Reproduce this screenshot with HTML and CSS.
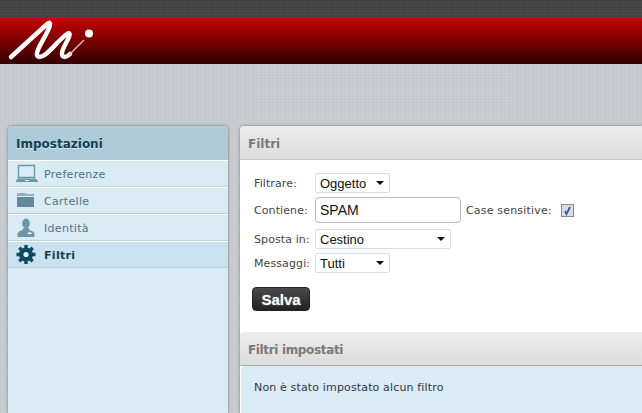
FILE: index.html
```html
<!doctype html>
<html lang="it">
  <head>
    <meta charset="UTF-8" />
    <title>Impostazioni - Filtri</title>
    <link rel="stylesheet" href="styles.css">
  </head>

  <body>
    <div class="topbar"></div>

    <header class="brand">
      <svg class="logo" width="100" height="46" viewBox="0 0 100 46">
        <path class="logo-thick" d="M11 39 L46 7 C50 3 51 5 49 10 C46 18 38 29 37 35 C36 40 41 40 46 36 C53 30 61 20 67 16 C70 14 70 16 69 19 C67 24 62 31 62 35 C62 40 66 40 70 36" />
        <path class="logo-thin" d="M69 37 C74 32 79 27 84 22" />
        <circle class="logo-dot" cx="89" cy="15.500" r="4" />
      </svg>
    </header>

    <div class="layout">
      <aside class="sidebar">
        <h2 class="sidebar-title">Impostazioni</h2>
        <ul class="menu">
          <li class="menu-item">
            <svg class="menu-icon" width="24" height="20" viewBox="0 0 24 20">
              <path fill="none" stroke="#6d97a8" stroke-width="1.400" d="M2.500 1.500h16v12h-16z" />
              <path fill="#6d97a8" d="M1.500 14.500h18l2.500 2.500v1H0v-1z" />
              <path fill="#fff" d="M9 16h4v1H9z" />
            </svg>
            Preferenze
          </li>
          <li class="menu-item">
            <svg class="menu-icon" width="24" height="20" viewBox="0 0 24 20">
              <path fill="#8fb0be" d="M2 2h7l1 1h8v2H1V3z" />
              <path fill="#64899a" d="M1 6h17v10H1z" />
            </svg>
            Cartelle
          </li>
          <li class="menu-item">
            <svg class="menu-icon" width="24" height="20" viewBox="0 0 24 20">
              <ellipse cx="10" cy="5.500" rx="3.800" ry="5" fill="#6d97a8" />
              <path fill="#6d97a8" d="M7.500 10h5l1 2 3.500 1.500 1.500 2V19h-17v-3.500l1.500-2L6.500 12z" />
              <path fill="#fff" d="M12 14.500h3.500V16H12z" />
            </svg>
            Identità
          </li>
          <li class="menu-item menu-item--active">
            <svg class="menu-icon" width="24" height="20" viewBox="0 0 24 20">
              <circle cx="10" cy="9.500" r="5" fill="none" stroke="#10495f" stroke-width="4" />
              <path fill="none" stroke="#10495f" stroke-width="3.400" d="M10 0v19M.500 9.500h19M3.300 2.800l13.400 13.400M16.700 2.800L3.300 16.200" />
              <circle cx="10" cy="9.500" r="2.600" fill="#e4f1f7" />
            </svg>
            Filtri
          </li>
        </ul>
      </aside>

      <main class="content">
        <h2 class="panel-title">Filtri</h2>
        <form class="filter-form">
          <div class="field field--first">
            <label class="field-label">Filtrare:</label>
            <span class="select select--short">
              <select><option>Oggetto</option></select>
            </span>
          </div>
          <div class="field field--text">
            <label class="field-label">Contiene:</label>
            <input class="text-input" type="text" value="SPAM" />
            <label class="case-label">Case sensitive:</label>
            <span class="checkbox">
              <svg width="11" height="11" viewBox="0 0 11 11">
                <path fill="none" stroke="#3a5a9c" stroke-width="1.800" d="M3 6l1.500 3L8 2" />
              </svg>
            </span>
          </div>
          <div class="field field--move">
            <label class="field-label">Sposta in:</label>
            <span class="select select--long">
              <select><option>Cestino</option></select>
            </span>
          </div>
          <div class="field">
            <label class="field-label">Messaggi:</label>
            <span class="select select--short">
              <select><option>Tutti</option></select>
            </span>
          </div>
          <button class="save-button" type="button">Salva</button>
        </form>

        <h2 class="panel-title panel-title--second">Filtri impostati</h2>
        <p class="empty-note">Non è stato impostato alcun filtro</p>
      </main>
    </div>
  </body>
</html>
```

FILE: styles.css
```css
* {
  box-sizing: border-box;
}

html,
body {
  height: 413px;
  overflow: hidden;
}

body {
  margin: 0;
  background-color: #c7cbcf;
  background-image:
    repeating-linear-gradient(0deg, rgba(255, 255, 255, 0.07) 0 1px, transparent 1px 3px),
    repeating-linear-gradient(90deg, rgba(0, 0, 0, 0.025) 0 1px, transparent 1px 4px);
  color: #444;
  font-family: "DejaVu Sans", sans-serif;
  font-size: 11px;
}

.topbar {
  height: 18px;
  background-color: #454545;
  background-image:
    repeating-linear-gradient(0deg, rgba(255, 255, 255, 0.04) 0 1px, transparent 1px 3px),
    repeating-linear-gradient(90deg, rgba(0, 0, 0, 0.08) 0 1px, transparent 1px 3px);
}

.brand {
  height: 46px;
  background: linear-gradient(#cc0000, #b00000 15%, #300000);
}

.logo {
  display: block;
}

.logo-thick {
  fill: none;
  stroke: #fff;
  stroke-width: 4.500;
  stroke-linecap: round;
}

.logo-thin {
  fill: none;
  stroke: #e8b9b9;
  stroke-width: 1.500;
}

.logo-dot {
  fill: #fff;
}

.layout {
  display: grid;
  grid-template-columns: 220px 1fr;
  gap: 12px;
  padding: 62px 0 0 8px;
}

.sidebar {
  height: 287px;
  background-color: #d9ebf3;
  border-radius: 4px 4px 0 0;
  box-shadow: 0 0 3px rgba(0, 0, 0, 0.45);
}

.sidebar-title {
  height: 35px;
  margin: 0;
  padding-left: 8px;
  background-color: #afcbd7;
  border-radius: 4px 4px 0 0;
  border-bottom: 1px solid #fff;
  color: #123f55;
  font-size: 12px;
  font-weight: bold;
  line-height: 37px;
  text-shadow: 0 1px 0 rgba(255, 255, 255, 0.5);
}

.menu {
  margin: 0;
  padding: 0;
  list-style: none;
}

.menu-item {
  display: flex;
  align-items: center;
  gap: 4px;
  height: 27px;
  padding: 2px 0 0 8px;
  border-top: 1px solid #fff;
  border-bottom: 1px solid #bcd3dd;
  color: #4f7486;
  letter-spacing: 0.300px;
}

.menu-item:first-child {
  border-top: 0;
  height: 26px;
}

.menu-item--active {
  background-color: #c8e2ef;
  color: #123f55;
  font-weight: bold;
}

.menu-icon {
  flex: none;
  width: 24px;
  margin-top: -2px;
}

.content {
  height: 287px;
  background-color: #fff;
  box-shadow: 0 0 3px rgba(0, 0, 0, 0.45);
  border-radius: 4px 0 0 0;
}

.panel-title {
  height: 34px;
  margin: 0;
  padding-left: 8px;
  background: linear-gradient(#ececec, #dcdcdc);
  border-bottom: 1px solid #c9c9c9;
  border-radius: 4px 0 0 0;
  color: #7a7a7a;
  font-size: 12px;
  font-weight: bold;
  line-height: 37px;
}

.panel-title--second {
  border-bottom: 1px solid #aaa;
  letter-spacing: -0.350px;
}

.filter-form {
  display: flex;
  flex-direction: column;
  align-items: flex-start;
  height: 172px;
  padding: 13px 0 0 14px;
}

.field {
  display: flex;
  align-items: center;
  height: 20px;
}

.field--first {
  margin-bottom: 4px;
}

.field--text {
  height: 26px;
  margin-bottom: 6px;
}

.field--move {
  margin-bottom: 4px;
}

.field-label {
  width: 61px;
  letter-spacing: 0.100px;
}

.select {
  position: relative;
  display: block;
  height: 20px;
  background-color: #fff;
  border: 1px solid #d5dfe6;
  border-radius: 2px;
}

.select::after {
  content: "";
  position: absolute;
  top: 7px;
  right: 5px;
  border-style: solid;
  border-width: 4px 4px 0;
  border-color: #111 transparent transparent;
}

.select--short {
  width: 75px;
}

.select--long {
  width: 136px;
}

.select select {
  display: block;
  width: 100%;
  height: 100%;
  padding: 0 0 0 4px;
  appearance: none;
  background: transparent;
  border: 0;
  color: #111;
  font-family: "Liberation Sans", sans-serif;
  font-size: 13px;
}

.text-input {
  width: 146px;
  height: 26px;
  padding: 0 4px;
  background-color: #fff;
  border: 1px solid #bbb;
  border-radius: 4px;
  color: #111;
  font-family: "Liberation Sans", sans-serif;
  font-size: 14px;
}

.case-label {
  margin: 0 9px 0 5px;
  letter-spacing: 0.180px;
}

.checkbox {
  display: block;
  width: 13px;
  height: 13px;
  padding: 0;
  background-color: #d8dce4;
  border: 1px solid #8a8a8a;
}

.checkbox svg {
  display: block;
}

.save-button {
  margin: 14px 0 0 -2px;
  width: 58px;
  height: 24px;
  padding: 0;
  background: linear-gradient(#4a4a4a, #222);
  border: 1px solid #222;
  border-radius: 4px;
  color: #fff;
  font-family: "Liberation Sans", sans-serif;
  font-size: 15px;
  font-weight: bold;
  text-shadow: 0 0 2px #889;
}

.empty-note {
  height: 47px;
  margin: 0 0 0 1px;
  padding: 15px 13px 0;
  background-color: #d9ebf3;
  border-radius: 4px 0 0 0;
  color: #33334d;
  letter-spacing: 0.150px;
}
```
